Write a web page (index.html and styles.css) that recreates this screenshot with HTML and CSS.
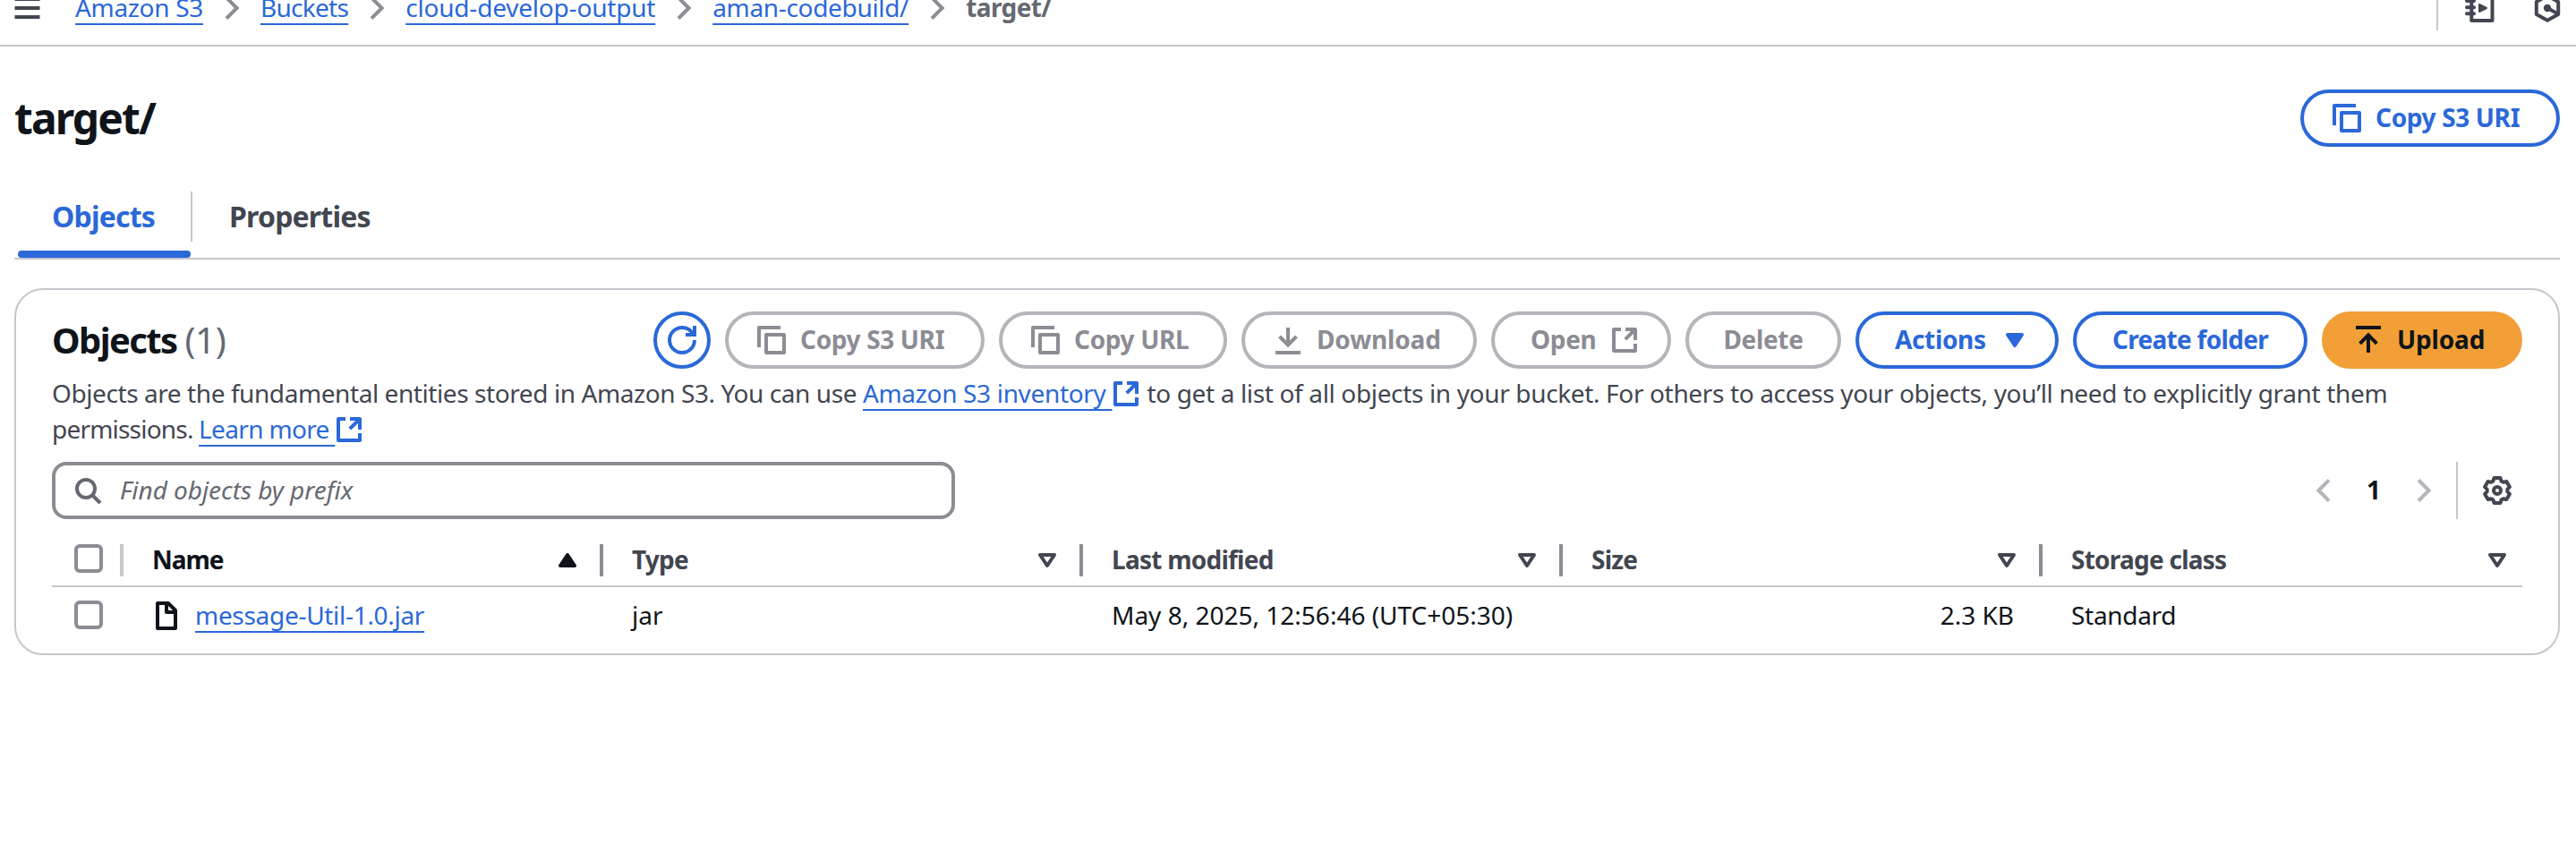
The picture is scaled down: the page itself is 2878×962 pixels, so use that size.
FILE: index.html
```
<!DOCTYPE html>
<html lang="en">
<head>
<meta charset="utf-8">
<title>target/ - S3 bucket</title>
<link rel="stylesheet" href="styles.css">
</head>
<body>
<svg class="sprite" width="0" height="0">
  <symbol id="menu" viewBox="0 0 32 32"><path d="M4.5 6h28M4.5 16h28M4.5 26h28" stroke-width="4"/></symbol>
  <symbol id="chev-r" viewBox="0 0 16 16"><path d="M5 2.2 10.8 8 5 13.8"/></symbol>
  <symbol id="chev-l" viewBox="0 0 16 16"><path d="M11 2.2 5.2 8l5.8 5.8"/></symbol>
  <symbol id="copy" viewBox="0 0 16 16"><path d="M13 1H1v11M5 5h10v10H5z" stroke-linejoin="round"/></symbol>
  <symbol id="refresh" viewBox="0 0 16 16"><path d="M15 8c0 3.87-3.13 7-7 7s-7-3.13-7-7 3.13-7 7-7c2.79 0 5.2 1.63 6.33 4"/><path d="M10 5h5V0"/></symbol>
  <symbol id="download" viewBox="0 0 16 16"><path d="M8 1v10M3.3 6 8 10.7 12.7 6M1 15h14"/></symbol>
  <symbol id="upload" viewBox="0 0 16 16"><path d="M8 15V5M3.3 9.9 8 5.2l4.7 4.7M1 1h14"/></symbol>
  <symbol id="external" viewBox="0 0 16 16"><path d="M6 2H2v12h12v-4M8.5 2H14v6M14 2 8.4 7.6" stroke-linejoin="round"/></symbol>
  <symbol id="caret" viewBox="0 0 16 16"><path d="M4 5h8l-4 6z" fill="currentColor" stroke-linejoin="round"/></symbol>
  <symbol id="caret-up" viewBox="0 0 16 16"><path d="M8 5l4 6H4z" fill="currentColor" stroke-linejoin="round"/></symbol>
  <symbol id="caret-open" viewBox="0 0 16 16"><path d="M4 5h8l-4 6z" stroke-linejoin="round"/></symbol>
  <symbol id="search" viewBox="0 0 16 16"><circle cx="7" cy="7" r="5"/><path d="M10.5 10.5 15 15"/></symbol>
  <symbol id="file" viewBox="0 0 16 16"><path d="M3 1h6l4 4v10H3zM8 1v5h5" stroke-linejoin="round"/></symbol>
  <symbol id="gear" viewBox="-16 -16 32 32"><path d="M-3.5-14H3.5L4.5-10.5 6.84-9.15 10.37-10.03 13.87-3.97 11.34-1.35V1.35L13.87 3.97 10.37 10.03 6.84 9.15 4.5 10.5 3.5 14H-3.5L-4.5 10.5-6.84 9.15-10.37 10.03-13.87 3.97-11.34 1.35V-1.35L-13.87-3.97-10.37-10.03-6.84-9.15-4.5-10.5Z" stroke-width="4" stroke-linejoin="round"/><circle r="4" stroke-width="4"/></symbol>
  <symbol id="notebook" viewBox="0 0 34 32"><path d="M7.3 2h23.2v28H7.3z" stroke-width="4" stroke-linejoin="round"/><path d="M2 8h8M2 15.3h8M2 22.3h8" stroke-width="4" stroke-linecap="round"/><path d="M16 12v8l8-4z" fill="currentColor" stroke-width="2" stroke-linejoin="round"/></symbol>
  <symbol id="hexagon" viewBox="0 0 32 32"><path d="M16 2.3 28.2 9v14L16 29.7 3.8 23V9z" stroke-width="4" stroke-linejoin="round"/><circle cx="16" cy="16" r="4.2" fill="currentColor" stroke="none"/><path d="M16 16l12 6.5" stroke-width="4"/></symbol>
</svg>

<header class="topbar">
  <nav class="crumbs">
    <svg class="icon menu"><use href="#menu"/></svg>
    <a class="link crumb-root">Amazon S3</a>
    <svg class="icon sep"><use href="#chev-r"/></svg>
    <a class="link crumb-buckets">Buckets</a>
    <svg class="icon sep"><use href="#chev-r"/></svg>
    <a class="link crumb-bucket">cloud-develop-output</a>
    <svg class="icon sep"><use href="#chev-r"/></svg>
    <a class="link crumb-folder">aman-codebuild/</a>
    <svg class="icon sep"><use href="#chev-r"/></svg>
    <span class="current">target/</span>
  </nav>
  <div class="tools">
    <span class="tools-divider"></span>
    <svg class="icon notebook"><use href="#notebook"/></svg>
    <svg class="icon"><use href="#hexagon"/></svg>
  </div>
</header>

<main class="page">
  <div class="title-row">
    <h1>target/</h1>
    <button class="btn w-copy-uri"><svg class="icon"><use href="#copy"/></svg><span>Copy S3 URI</span></button>
  </div>

  <div class="tabs">
    <div class="tab active"><span class="tab-label">Objects</span></div>
    <div class="tab second"><span class="tab-label">Properties</span></div>
  </div>

  <section class="panel">
    <div class="panel-head">
      <h2>Objects <span class="count">(1)</span></h2>
      <div class="actions">
        <button class="btn round"><svg class="icon"><use href="#refresh"/></svg></button>
        <button class="btn off w-copy-uri"><svg class="icon"><use href="#copy"/></svg><span>Copy S3 URI</span></button>
        <button class="btn off w-copy-url"><svg class="icon"><use href="#copy"/></svg><span>Copy URL</span></button>
        <button class="btn off w-download"><svg class="icon"><use href="#download"/></svg><span>Download</span></button>
        <button class="btn off text-first w-open"><span>Open</span><svg class="icon"><use href="#external"/></svg></button>
        <button class="btn off centered w-delete"><span>Delete</span></button>
        <button class="btn text-first w-actions"><span>Actions</span><svg class="icon"><use href="#caret"/></svg></button>
        <button class="btn centered w-create"><span>Create folder</span></button>
        <button class="btn primary w-upload"><svg class="icon"><use href="#upload"/></svg><span>Upload</span></button>
      </div>
    </div>

    <p class="desc"><span class="d1">Objects are the fundamental entities stored in Amazon S3. You can use </span><a class="link d2">Amazon S3 inventory&nbsp;</a><svg class="icon ext"><use href="#external"/></svg><span class="d3"> to get a list of all objects in your bucket. For others to access your objects, you’ll need to explicitly grant them</span><br><span class="d4">permissions. </span><a class="link d5">Learn more&nbsp;</a><svg class="icon ext"><use href="#external"/></svg></p>

    <div class="filter-row">
      <div class="search"><svg class="icon"><use href="#search"/></svg><span>Find objects by prefix</span></div>
      <div class="pager">
        <svg class="icon dim"><use href="#chev-l"/></svg>
        <span class="page-no">1</span>
        <svg class="icon dim"><use href="#chev-r"/></svg>
        <span class="pager-divider"></span>
        <svg class="icon gear"><use href="#gear"/></svg>
      </div>
    </div>

    <div class="table">
      <div class="row head">
        <div class="cell select"><span class="box"></span></div>
        <div class="cell sorted"><span class="name">Name</span><svg class="icon"><use href="#caret-up"/></svg></div>
        <div class="cell"><span>Type</span><svg class="icon"><use href="#caret-open"/></svg></div>
        <div class="cell"><span>Last modified</span><svg class="icon"><use href="#caret-open"/></svg></div>
        <div class="cell"><span>Size</span><svg class="icon"><use href="#caret-open"/></svg></div>
        <div class="cell last"><span>Storage class</span><svg class="icon"><use href="#caret-open"/></svg></div>
      </div>
      <div class="row body">
        <div class="cell select"><span class="box"></span></div>
        <div class="cell file"><svg class="icon"><use href="#file"/></svg><a class="link file-name">message-Util-1.0.jar</a></div>
        <div class="cell"><span>jar</span></div>
        <div class="cell"><span>May 8, 2025, 12:56:46 (UTC+05:30)</span></div>
        <div class="cell num"><span>2.3 KB</span></div>
        <div class="cell storage"><span>Standard</span></div>
      </div>
    </div>
  </section>
</main>
</body>
</html>
```
FILE: styles.css
```
* { box-sizing: border-box; }

body {
  margin: 0;
  height: 962px;
  overflow: hidden;
  background: #fff;
  color: #0f141a;
  font: 400 28px/40px "Noto Sans", "Open Sans", sans-serif;
}

.sprite { position: absolute; }

.icon {
  flex: none;
  width: 32px;
  height: 32px;
  overflow: visible;
  fill: none;
  stroke: currentColor;
  stroke-width: 2;
}

symbol { overflow: visible; }

.link {
  color: #2b68d8;
  text-decoration: underline 2px;
  text-underline-offset: 7px;
  text-decoration-skip-ink: none;
  white-space: pre;
}

/* Breadcrumb bar */
.topbar {
  display: flex;
  justify-content: space-between;
  height: 52px;
  border-bottom: 2px solid #c6c6cd;
}

.crumbs, .tools {
  display: flex;
  align-items: center;
  height: 40px;
  margin-top: -11px;
}

.crumbs { padding-left: 12px; color: #656871; }
.crumbs .link, .current { padding-bottom: 2px; }
.menu { margin-right: 40px; color: #424650; }
.sep { margin: 0 16px; color: #8c8c94; }
.current { font-weight: 700; letter-spacing: -.6px; }
.crumb-root { letter-spacing: -.33px; }
.crumb-buckets { letter-spacing: -.7px; }
.crumb-bucket { letter-spacing: -.2px; }
.crumb-folder { letter-spacing: -.33px; }

.tools { gap: 42px; padding-right: 16px; color: #424650; }
.tools-divider { width: 2px; height: 50px; margin-right: -12px; background: #c6c6cd; }
.notebook { width: 34px; }

/* Page title */
.page { padding: 48px 18px 0 16px; }

.title-row {
  display: flex;
  align-items: center;
  justify-content: space-between;
  height: 64px;
}

h1, h2, p { margin: 0; }
h1 { font-size: 48px; line-height: 64px; font-weight: 700; letter-spacing: -1.9px; }

/* Buttons */
.btn {
  display: flex;
  align-items: center;
  gap: 16px;
  height: 64px;
  padding: 0 0 0 32px;
  border: 4px solid #2b68d8;
  border-radius: 32px;
  background: #fff;
  color: #2b68d8;
  font: 700 28px/40px "Noto Sans", "Open Sans", sans-serif;
  letter-spacing: -.35px;
  white-space: nowrap;
}

.btn span { padding-bottom: 2px; }
.btn.off { border-color: #b4b4bb; color: #8c8c94; }
.btn.primary { border-color: #f29f38; background: #f29f38; color: #0f141a; }
.btn.round { justify-content: center; width: 64px; padding: 0; }
.btn.centered { justify-content: center; padding: 0; }
.btn.text-first { justify-content: space-between; padding: 0 32px 0 40px; }
.w-copy-uri { width: 290px; }
.w-copy-url { width: 255px; }
.btn.w-download { width: 263px; letter-spacing: -.15px; }
.w-open { width: 201px; }
.w-delete { width: 174px; }
.w-actions { width: 227px; }
.btn.w-create { width: 262px; letter-spacing: -.7px; }
.btn.w-upload { width: 224px; letter-spacing: -.15px; }

/* Tabs */
.tabs {
  display: flex;
  height: 126px;
  padding: 50px 0 0 4px;
  border-bottom: 2px solid #c6c6cd;
  color: #424650;
  font-size: 32px;
  font-weight: 700;
  letter-spacing: -.8px;
}

.tab-label { display: block; height: 56px; line-height: 56px; }
.active { width: 193px; color: #2b68d8; }
.active .tab-label { padding-left: 38px; }
.active::after {
  content: "";
  display: block;
  height: 8px;
  margin-top: 10px;
  border-radius: 4px;
  background: #2b68d8;
}
.second .tab-label { padding-left: 41px; border-left: 2px solid #c6c6cd; }

/* Objects panel */
.panel {
  height: 410px;
  margin-top: 32px;
  padding: 24px 40px 0;
  border: 2px solid #c6c6cd;
  border-radius: 32px;
}

.panel-head { display: flex; align-items: center; justify-content: space-between; }
h2 { font-size: 40px; font-weight: 700; line-height: 48px; letter-spacing: -1.6px; }
.count { color: #656871; font-weight: 400; letter-spacing: -.3px; }
.actions { display: flex; gap: 16px; }

.desc { height: 80px; margin-top: 7px; color: #424650; white-space: nowrap; }
.ext { color: #2b68d8; vertical-align: -6px; }
.d1 { letter-spacing: -.42px; }
.d2 { letter-spacing: -.33px; }
.d3 { letter-spacing: -.35px; }
.d4 { letter-spacing: -.8px; }
.d5 { letter-spacing: -.67px; }

.filter-row {
  display: flex;
  align-items: center;
  justify-content: space-between;
  height: 64px;
  margin-top: 17px;
}

.search {
  display: flex;
  align-items: center;
  gap: 20px;
  width: 1009px;
  height: 64px;
  padding-left: 20px;
  border: 4px solid #8c8c94;
  border-radius: 16px;
  color: #656871;
  font-style: italic;
  letter-spacing: -.05px;
}

.search span, .page-no { padding-bottom: 2px; }

.pager { display: flex; align-items: center; padding-right: 12px; }
.dim { color: #b4b4bb; }
.page-no { width: 80px; text-align: center; font-weight: 700; }
.pager-divider { width: 2px; height: 64px; margin: 0 28px 0 20px; background: #c6c6cd; }
.gear { color: #424650; }

/* Table */
.table { margin-top: 18px; }
.row { display: grid; grid-template-columns: 80px repeat(5, 536px); align-items: center; }
.head { height: 58px; border-bottom: 2px solid #c6c6cd; color: #424650; font-weight: 700; letter-spacing: -.75px; }
.body { height: 64px; }

.cell {
  display: flex;
  align-items: center;
  justify-content: space-between;
  height: 36px;
  padding-left: 32px;
}

.cell span:not(.box), .file-name { padding-bottom: 2px; }
.head .cell { padding-right: 20px; border-right: 4px solid #8c8c94; }
.head .select { border-right-color: #c6c6cd; }
.head .last { padding-right: 12px; border-right: 0; }
.cell.select { padding: 0 0 0 25px; }
.sorted { color: #0f141a; letter-spacing: -1px; }
.storage { letter-spacing: -.3px; }

.box {
  width: 32px;
  height: 32px;
  margin-bottom: 4px;
  border: 4px solid #8c8c94;
  border-radius: 6px;
}
.body .box { margin-bottom: 2px; }

.file { justify-content: flex-start; gap: 16px; padding-left: 32px; }
.file-name { letter-spacing: -.3px; }
.num { justify-content: flex-end; padding-right: 32px; }
```
